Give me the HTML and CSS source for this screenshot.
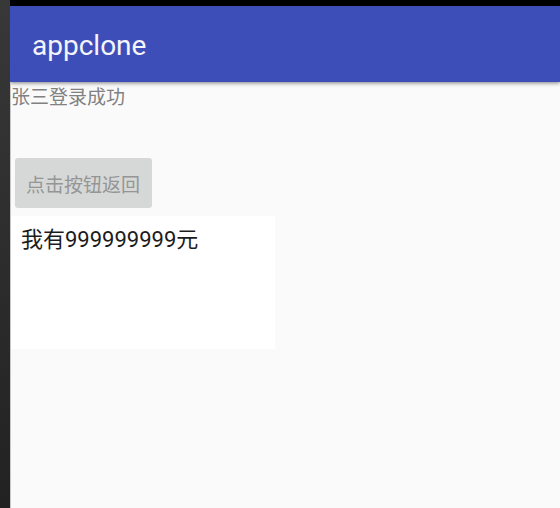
FILE: index.html
```html
<!DOCTYPE html>
<html lang="zh-CN">
<head>
<meta charset="utf-8">
<title>appclone</title>
<link rel="stylesheet" href="styles.css">
</head>
<body>
<div class="screen">
  <div class="status-bar"></div>
  <header class="app-bar"><h1 class="title">appclone</h1></header>
  <main class="content">
    <p class="message">张三登录成功</p>
    <button class="back-button" type="button">点击按钮返回</button>
    <section class="panel">我有999999999元</section>
  </main>
</div>
</body>
</html>
```

FILE: styles.css
```css
* {
  box-sizing: border-box;
}

body {
  margin: 0;
  padding-left: 10px;
  min-height: 100vh;
  display: flex;
  background: linear-gradient(#383838, #222222);
  font-family: Roboto, "Noto Sans CJK SC", sans-serif;
}

.screen {
  flex: 1;
  display: flex;
  flex-direction: column;
  overflow: hidden;
  background: #fafafa;
}

.status-bar {
  height: 6px;
  background: #000000;
}

.app-bar {
  display: flex;
  align-items: center;
  height: 76px;
  padding: 4px 22px 0;
  background: #3e4eb8;
  box-shadow: 0 1px 4px rgba(0, 0, 0, 0.5);
}

.title {
  margin: 0;
  color: #f4f5fb;
  font-size: 28px;
  font-weight: 400;
  line-height: 32px;
}

.content {
  flex: 1;
  display: flex;
  flex-direction: column;
  align-items: flex-start;
  border-left: 1px solid #c8c8c8;
}

.message {
  margin: 0;
  color: #818181;
  font-size: 19px;
  line-height: 32px;
}

.back-button {
  margin: 44px 4px 8px;
  padding: 12px 12px 6px 11px;
  border: 0;
  border-radius: 3px;
  background: #d6d8d7;
  color: #949595;
  font-family: inherit;
  font-size: 19px;
  line-height: 32px;
}

.panel {
  width: 48%;
  min-height: 133px;
  padding: 8px 10px;
  background: #ffffff;
  color: #1c1c1c;
  font-size: 22px;
  line-height: 32px;
}
```
